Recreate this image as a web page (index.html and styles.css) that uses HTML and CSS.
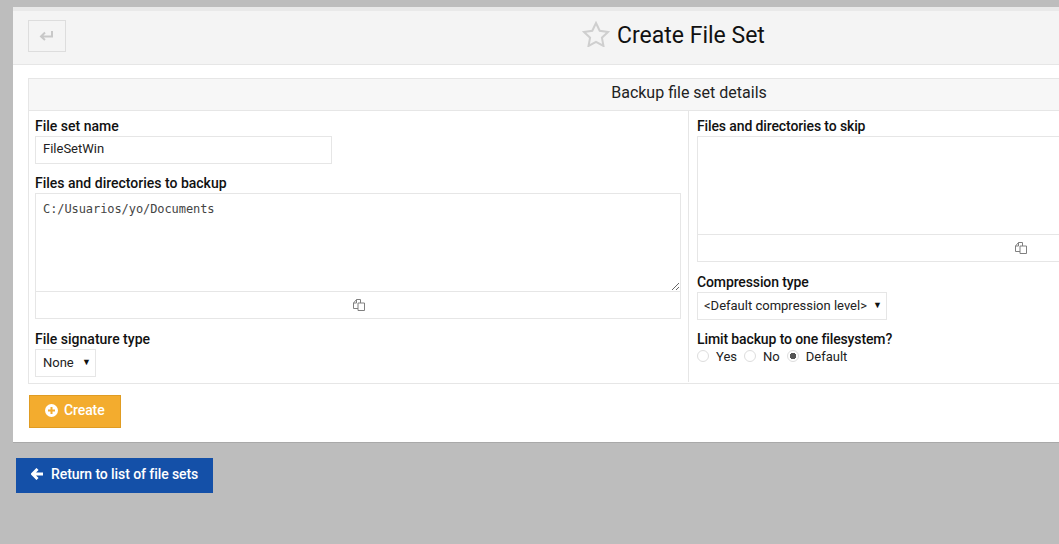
FILE: index.html
```html
<!DOCTYPE html>
<html>
<head>
    <meta name="viewport" content="width=device-width, initial-scale=1.0">
    <link rel="stylesheet" href="styles.css">
</head>
<body>
    <div class="panel">
        <div class="panel-head">
            <button class="back-btn" type="button">
                <svg width="14" height="10" viewBox="0 0 14 10"><path d="M13 0v5.500H3M6 1.500 2 5.500l4 3.500" fill="none" stroke="#c8c8c8" stroke-width="2"/></svg>
            </button>
            <div class="title">
                <svg class="star" width="28" height="26" viewBox="0 0 28 26"><path d="M14 2l3.700 7.800 8.300 1.100-6.100 5.800 1.600 8.300-7.500-4.100-7.500 4.100 1.600-8.300L2 10.900l8.300-1.100z" fill="none" stroke="#cfcfcf" stroke-width="2"/></svg>
                <h1>Create File Set</h1>
            </div>
        </div>
        <div class="panel-body">
            <div class="details">
                <div class="details-head">Backup file set details</div>
                <div class="columns">
                    <div class="col-left">
                        <label class="field-label">File set name</label>
                        <input class="text-input" type="text" value="FileSetWin">
                        <label class="field-label">Files and directories to backup</label>
                        <div class="editor">
                            <textarea class="editor-text" spellcheck="false">C:/Usuarios/yo/Documents</textarea>
                            <div class="editor-foot">
                                <svg width="12" height="12" viewBox="0 0 12 12"><path d="M5 9.500H.5V4L3.500.5h4v3.500M3.500.5V4H.5M5 4h6.500v7.500H5z" fill="none" stroke="#808080" stroke-width="1"/></svg>
                            </div>
                        </div>
                        <label class="field-label">File signature type</label>
                        <div class="select-box">None<span class="caret">▼</span></div>
                    </div>
                    <div class="col-right">
                        <label class="field-label">Files and directories to skip</label>
                        <div class="editor">
                            <textarea class="editor-text" spellcheck="false"></textarea>
                            <div class="editor-foot">
                                <svg width="12" height="12" viewBox="0 0 12 12"><path d="M5 9.500H.5V4L3.500.5h4v3.500M3.500.5V4H.5M5 4h6.500v7.500H5z" fill="none" stroke="#808080" stroke-width="1"/></svg>
                            </div>
                        </div>
                        <label class="field-label">Compression type</label>
                        <div class="select-box">&lt;Default compression level&gt;<span class="caret">▼</span></div>
                        <label class="field-label">Limit backup to one filesystem?</label>
                        <div class="radios">
                            <span class="radio"></span><span class="radio-text">Yes</span>
                            <span class="radio"></span><span class="radio-text">No</span>
                            <span class="radio checked"></span><span class="radio-text">Default</span>
                        </div>
                    </div>
                </div>
            </div>
            <button class="create-btn" type="button">
                <svg width="13" height="13" viewBox="0 0 13 13"><circle cx="6.500" cy="6.500" r="6.500" fill="#fff"/><path d="M3 6.500h7M6.500 3v7" stroke="#f3ac2e" stroke-width="2"/></svg>
                Create
            </button>
        </div>
    </div>
    <a class="return-btn" href="#">
        <svg width="12" height="12" viewBox="0 0 12 12"><path d="M6.500 1 1.500 6l5 5M2 6h10" fill="none" stroke="#fff" stroke-width="3"/></svg>
        Return to list of file sets
    </a>
</body>
</html>
```

FILE: styles.css
```css
html, body {
    height: 100%;
    overflow: hidden;
}

body {
    margin: 0;
    padding: 7px 0 0 13px;
    box-sizing: border-box;
    background-color: #bdbdbd;
    font-family: Roboto, "Liberation Sans", sans-serif;
    font-size: 13px;
    color: #222;
}

.panel {
    width: 1352px;
    height: 436px;
    box-sizing: border-box;
    background-color: #fff;
    border-top: 4px solid #e9e9e9;
    border-bottom: 1px solid #a9a9a9;
}

.panel-head {
    display: flex;
    align-items: flex-start;
    box-sizing: border-box;
    height: 54px;
    padding: 9px 0 0 15px;
    background-color: #f4f4f4;
    border-bottom: 1px solid #e6e6e6;
}

.back-btn {
    flex: none;
    width: 38px;
    height: 32px;
    padding: 0 2px 0 0;
    background: none;
    border: 1px solid #ddd;
}

.title {
    display: flex;
    align-items: center;
    gap: 7px;
    height: 30px;
    margin-left: 516px;
}

.star {
    margin-top: -3px;
}

h1 {
    margin: 0;
    font-size: 23px;
    font-weight: 400;
    color: #111;
}

.panel-body {
    padding: 13px 0 0 15px;
}

.details {
    box-sizing: border-box;
    width: 1322px;
    border: 1px solid #e6e6e6;
}

.details-head {
    box-sizing: border-box;
    height: 32px;
    padding-top: 5px;
    text-align: center;
    background-color: #f7f7f7;
    border-bottom: 1px solid #e6e6e6;
    font-size: 16px;
    line-height: 17px;
    color: #222;
}

.columns {
    display: flex;
    height: 272px;
}

.col-left {
    flex: none;
    box-sizing: border-box;
    width: 660px;
    height: 271px;
    padding: 7px 7px 0 6px;
    border-right: 1px solid #e6e6e6;
}

.col-right {
    flex: 1;
    padding: 7px 7px 0 8px;
}

.field-label {
    display: block;
    height: 18px;
    font-size: 14px;
    font-weight: 500;
    line-height: 17px;
    color: #111;
}

.col-right .field-label {
    letter-spacing: -0.12px;
}

.text-input {
    display: block;
    box-sizing: border-box;
    width: 297px;
    height: 28px;
    margin-bottom: 11px;
    padding: 0 7px 3px;
    border: 1px solid #e6e6e6;
    font-family: inherit;
    font-size: 13px;
    color: #222;
    outline: none;
}

.editor {
    box-sizing: border-box;
    height: 126px;
    margin-bottom: 12px;
    border: 1px solid #e6e6e6;
}

.editor-text {
    display: block;
    box-sizing: border-box;
    width: 100%;
    height: 98px;
    padding: 8px 7px;
    border: none;
    border-bottom: 1px solid #e6e6e6;
    outline: none;
    font-family: "DejaVu Sans Mono", monospace;
    font-size: 12px;
    letter-spacing: -0.08px;
    color: #444;
}

.col-right .editor-text {
    resize: none;
}

.editor-foot {
    display: flex;
    align-items: center;
    justify-content: center;
    height: 26px;
    padding-left: 2px;
}

.select-box {
    display: flex;
    align-items: center;
    justify-content: space-between;
    box-sizing: border-box;
    width: 61px;
    height: 28px;
    padding: 0 4px 2px 7px;
    margin-bottom: 11px;
    border: 1px solid #e6e6e6;
    font-size: 13px;
    white-space: nowrap;
    color: #222;
}

.col-right .select-box {
    width: 190px;
    padding: 0 4px 2px 6px;
}

.caret {
    font-size: 9px;
    color: #111;
}

.radios {
    display: flex;
    align-items: center;
    height: 16px;
    margin-top: -1px;
}

.radio {
    box-sizing: border-box;
    display: block;
    width: 12px;
    height: 12px;
    border: 1px solid #ddd;
    border-radius: 50%;
    background: #fff;
}

.radio.checked {
    background: radial-gradient(circle, #555 0 3px, #fff 3.500px);
}

.radio-text {
    margin: 0 7px;
}

.create-btn {
    display: flex;
    align-items: center;
    gap: 6px;
    width: 92px;
    height: 33px;
    margin: 11px 0 0 1px;
    padding: 0 0 3px 15px;
    box-sizing: border-box;
    background-color: #f3ac2e;
    border: 1px solid #e09c22;
    color: #fff;
    font-family: inherit;
    font-size: 14px;
    font-weight: 500;
    letter-spacing: -0.1px;
}

.return-btn {
    display: flex;
    align-items: center;
    gap: 8px;
    box-sizing: border-box;
    width: 197px;
    height: 35px;
    margin: 15px 0 0 3px;
    padding: 0 0 4px 15px;
    background-color: #1450a8;
    color: #fff;
    font-size: 14px;
    font-weight: 500;
    letter-spacing: -0.08px;
    text-decoration: none;
}
```
